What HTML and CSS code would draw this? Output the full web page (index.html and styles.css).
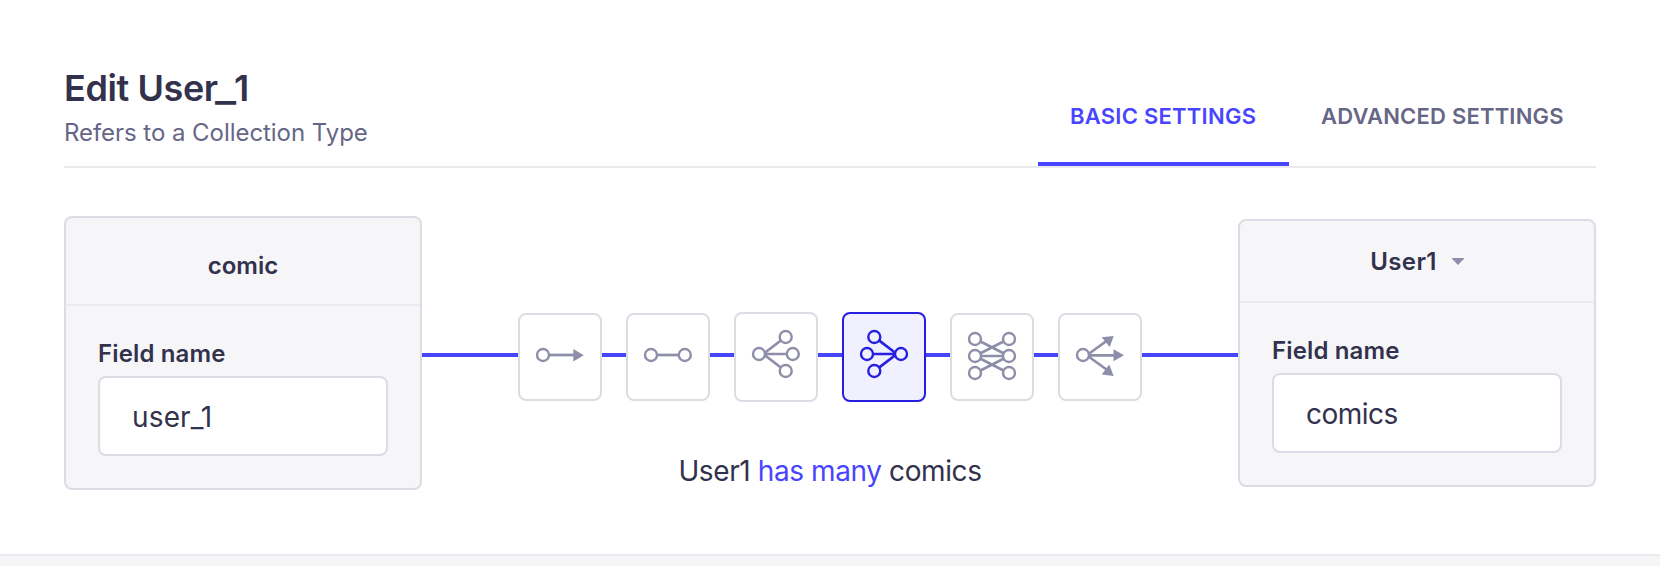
FILE: index.html
```html
<!DOCTYPE html>
<html lang="en">
<head>
<meta charset="utf-8">
<title>Edit User_1</title>
<link rel="stylesheet" href="styles.css">
</head>
<body>
<main class="modal">
  <header class="modal-header">
    <div class="heading">
      <h1 class="title">Edit User<span class="underscore">_</span>1</h1>
      <p class="subtitle">Refers to a Collection Type</p>
    </div>
    <nav class="tabs">
      <a class="tab tab-active">BASIC SETTINGS</a>
      <a class="tab tab-advanced">ADVANCED SETTINGS</a>
    </nav>
  </header>
  <section class="relation">
    <div class="card card-left">
      <div class="card-header"><span>comic</span></div>
      <div class="card-body">
        <label class="label">Field name</label>
        <div class="input"><span class="value-user">user_1</span></div>
      </div>
    </div>
    <div class="center">
      <div class="natures">
        <i class="wire wire-end"></i>
        <button class="nature"><svg class="icon" viewBox="-4 -4 56 56"><circle cx="7" cy="22" r="6"/><path d="M13 22H38"/><path class="fill" d="M37.3 16 47.8 22.2 37.3 28.4Z"/></svg></button>
        <i class="wire"></i>
        <button class="nature"><svg class="icon" viewBox="-4 -4 56 56"><circle cx="7" cy="22" r="6"/><circle cx="40.8" cy="22" r="6"/><path d="M13 22H35"/></svg></button>
        <i class="wire"></i>
        <button class="nature nature-tall"><svg class="icon" viewBox="-4 -4 56 56"><circle cx="7" cy="21" r="6"/><circle cx="40.8" cy="21" r="6"/><circle cx="33.7" cy="4" r="6"/><circle cx="33.7" cy="38" r="6"/><path d="M13 21H35M12.5 20 28.5 7.7M12.5 22 28.5 34.3"/></svg></button>
        <i class="wire"></i>
        <button class="nature nature-tall nature-selected"><svg class="icon" viewBox="-4 -4 56 56"><circle cx="7" cy="21" r="6"/><circle cx="41" cy="21" r="6"/><circle cx="14.3" cy="4" r="6"/><circle cx="14.3" cy="38" r="6"/><path d="M13 21H35M35.5 20 19.3 7.7M35.5 22 19.3 34.3"/></svg></button>
        <i class="wire"></i>
        <button class="nature"><svg class="icon" viewBox="-4 -4 56 56"><circle cx="7" cy="6" r="6"/><circle cx="7" cy="23" r="6"/><circle cx="7" cy="40" r="6"/><circle cx="41" cy="6" r="6"/><circle cx="41" cy="23" r="6"/><circle cx="41" cy="40" r="6"/><path d="M13 23H35M12.5 8.5 35.5 20.3M12.5 20.3 35.5 8.5M12.5 25.7 35.5 37.5M12.5 37.5 35.5 25.7"/></svg></button>
        <i class="wire"></i>
        <button class="nature"><svg class="icon" viewBox="-4 -4 56 56"><circle cx="7" cy="22" r="6"/><path d="M13 22.3H38M12.5 21 30.5 8M12.5 23.5 30.5 36.5"/><path class="fill" d="M37.5 16.3 48 22.3 37.5 28.3ZM37.7 3 25.7 4.2 33.7 14ZM37.7 43 25.7 41.5 33.3 31.5Z"/></svg></button>
        <i class="wire wire-end"></i>
      </div>
      <p class="sentence">User1 <span class="verb">has many</span> comics</p>
    </div>
    <div class="card card-right">
      <div class="card-header"><span>User1</span><svg class="caret" viewBox="0 0 12 7"><path d="M0 0H12V.8L6 7 0 .8Z"/></svg></div>
      <div class="card-body">
        <label class="label">Field name</label>
        <div class="input"><span class="value-comics">comics</span></div>
      </div>
    </div>
  </section>
</main>
<footer class="modal-footer"></footer>
</body>
</html>
```
FILE: styles.css
```css
* { box-sizing: border-box; }
body {
  margin: 0;
  height: 566px;
  overflow: hidden;
  background: #fff;
  color: #32324d;
  font-family: Inter, "Liberation Sans", sans-serif;
}
.modal { height: 554px; padding: 0 64px; }
.modal-header {
  display: flex;
  justify-content: space-between;
  align-items: flex-end;
  height: 168px;
  border-bottom: 2px solid #eaeaef;
}
.heading { padding-bottom: 17px; }
.title { margin: 0; font-size: 36px; line-height: 44px; font-weight: 600; letter-spacing: -0.4px; }
.underscore { display: inline-block; margin: 0 0.4px 0 -0.6px; transform: scaleX(1.25); }
.subtitle { margin: 7px 0 0; font-size: 24px; line-height: 32px; letter-spacing: -0.05px; color: #666687; }
.tabs { display: flex; }
.tab {
  height: 82px;
  padding: 18px 32px 0;
  font-size: 22px;
  line-height: 28px;
  font-weight: 600;
  letter-spacing: 0.25px;
  color: #666687;
  white-space: nowrap;
}
.tab-active { width: 251px; padding-right: 0; color: #4945ff; border-bottom: 4px solid #4945ff; }
.tab-advanced { width: 307px; padding-right: 0; letter-spacing: 0.2px; }
.relation { display: flex; padding-top: 48px; align-items: flex-start; }
.card {
  width: 358px;
  border: 2px solid #dcdce4;
  border-radius: 8px;
  background: #f6f6f9;
}
.card-left { height: 274px; }
.card-right { height: 268px; margin-top: 3px; }
.card-header {
  display: flex;
  align-items: center;
  justify-content: center;
  height: 88px;
  padding-top: 8px;
  border-bottom: 2px solid #eaeaef;
  font-size: 24px;
  font-weight: 600;
}
.card-right .card-header { height: 82px; padding-top: 0; gap: 15px; letter-spacing: 0.4px; }
.card-body { display: flex; flex-direction: column; gap: 6px; padding: 32px; }
.label { font-size: 24px; line-height: 32px; font-weight: 600; letter-spacing: 0.15px; }
.input {
  display: flex;
  align-items: center;
  height: 80px;
  padding: 2px 32px 0;
  border: 2px solid #dcdce4;
  border-radius: 8px;
  background: #fff;
  font-size: 28px;
}
.value-user { letter-spacing: 0.15px; }
.value-comics { letter-spacing: -0.5px; }
.caret { width: 12px; height: 7px; fill: #8e8ea9; }
.center { width: 816px; padding-top: 94px; }
.natures { display: flex; align-items: center; height: 94px; }
.wire { flex: none; width: 24px; height: 4px; margin-top: -4px; background: #4945ff; }
.wire-end { width: 96px; }
.nature {
  display: flex;
  align-items: center;
  justify-content: center;
  flex: none;
  width: 84px;
  height: 88px;
  padding: 0;
  border: 2px solid #dcdce4;
  border-radius: 8px;
  background: #fff;
  color: #8e8ea9;
}
.nature-tall { height: 90px; }
.nature-selected { background: #f0f0ff; border-color: #271fe0; color: #271fe0; }
.icon { width: 56px; height: 56px; fill: none; stroke: currentColor; stroke-width: 2.4; }
.icon path { stroke-width: 2.7; }
.icon .fill { fill: currentColor; stroke: none; }
.sentence { margin: 47px 0 0; text-align: center; font-size: 28px; line-height: 40px; letter-spacing: -0.4px; }
.verb { color: #4945ff; }
.modal-footer { height: 12px; border-top: 2px solid #eaeaef; background: #f6f6f9; }
```
